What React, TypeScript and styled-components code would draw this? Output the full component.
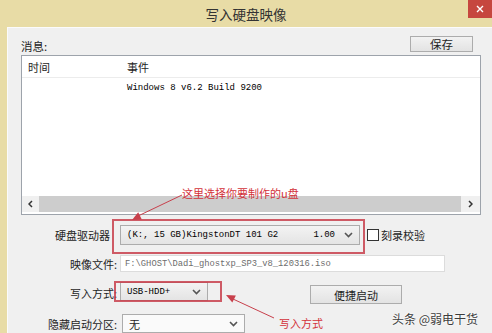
import styled, { createGlobalStyle } from "styled-components";

const annotationRed = "#c8404c";

const Chevron = ({ dir = "down" }: { dir?: "down" | "left" | "right" }) => {
    if (dir === "left") {
        return (
            <svg width="5" height="8" viewBox="0 0 5 8">
                <polyline points="4,1 1,4 4,7" fill="none" stroke="#333" strokeWidth="1.5" />
            </svg>
        );
    }
    if (dir === "right") {
        return (
            <svg width="5" height="8" viewBox="0 0 5 8">
                <polyline points="1,1 4,4 1,7" fill="none" stroke="#333" strokeWidth="1.5" />
            </svg>
        );
    }
    return (
        <svg width="9" height="6" viewBox="0 0 9 6">
            <polyline points="1,1 4.5,4.5 8,1" fill="none" stroke="#555" strokeWidth="1.6" />
        </svg>
    );
};

export default function App() {
    return (
        <>
            <GlobalStyle />
            <Window>
                <TitleBar>
                    <Title>写入硬盘映像</Title>
                    <CloseButton aria-label="关闭">
                        <svg width="8" height="8" viewBox="0 0 8 8">
                            <path d="M1 1L7 7M7 1L1 7" stroke="#fff" strokeWidth="1.4" />
                        </svg>
                    </CloseButton>
                </TitleBar>

                <Body>
                    <TopRow>
                        <SectionLabel>消息:</SectionLabel>
                        <SaveButton>保存</SaveButton>
                    </TopRow>

                    <ListBox>
                        <ListHeader>
                            <span>时间</span>
                            <span>事件</span>
                        </ListHeader>
                        <ListRows>
                            <ListRow>
                                <span />
                                <Mono>Windows 8 v6.2 Build 9200</Mono>
                            </ListRow>
                        </ListRows>
                        <HScrollBar>
                            <ScrollArrow $w={17}>
                                <Chevron dir="left" />
                            </ScrollArrow>
                            <ScrollThumb />
                            <ScrollArrow $w={19}>
                                <Chevron dir="right" />
                            </ScrollArrow>
                        </HScrollBar>
                    </ListBox>

                    <Form>
                        <FieldLabel $pad={7}>硬盘驱动器</FieldLabel>
                        <FieldCell>
                            <Combo $width={240} $height={20}>
                                <Mono>(K:, 15 GB)KingstonDT 101 G2</Mono>
                                <Spacer />
                                <Mono>1.00</Mono>
                                <ComboArrow $gap={9}>
                                    <Chevron />
                                </ComboArrow>
                            </Combo>
                            <CheckBox />
                            <CheckLabel>刻录校验</CheckLabel>
                            <MarkBox $left={-8} $top={-6} $width={253} $height={35} />
                        </FieldCell>

                        <FieldLabel>映像文件:</FieldLabel>
                        <FieldCell>
                            <PathInput>
                                <Mono>F:\GHOST\Dadi_ghostxp_SP3_v8_120316.iso</Mono>
                            </PathInput>
                        </FieldCell>

                        <FieldLabel>写入方式:</FieldLabel>
                        <FieldCell $align="flex-start">
                            <Combo $width={88} $height={19}>
                                <Mono>USB-HDD+</Mono>
                                <Spacer />
                                <ComboArrow $gap={0}>
                                    <Chevron />
                                </ComboArrow>
                            </Combo>
                            <QuickBootButton>便捷启动</QuickBootButton>
                            <MarkBox $left={-6} $top={-1} $width={108} $height={21} />
                        </FieldCell>

                        <FieldLabel>隐藏启动分区:</FieldLabel>
                        <FieldCell>
                            <Combo $width={123} $height={19} $light $offset={2}>
                                <ComboText>无</ComboText>
                                <Spacer />
                                <ComboArrow $gap={0}>
                                    <Chevron />
                                </ComboArrow>
                            </Combo>
                        </FieldCell>
                    </Form>
                </Body>

                <Arrows width="492" height="333" viewBox="0 0 492 333">
                    <line x1="182" y1="195" x2="138" y2="216" stroke={annotationRed} strokeWidth="1" />
                    <polygon points="132,220 141.8,219.5 138.2,212.3" fill={annotationRed} />
                    <line x1="274" y1="318" x2="233" y2="299" stroke={annotationRed} strokeWidth="1" />
                    <polygon points="226,295 235.9,295.4 232.3,302.6" fill={annotationRed} />
                </Arrows>
                <Note $left={182} $top={186}>这里选择你要制作的u盘</Note>
                <Note $left={279} $top={316}>写入方式</Note>
                <Watermark>头条 @弱电干货</Watermark>
            </Window>
        </>
    );
}

const GlobalStyle = createGlobalStyle`
    html, body {
        margin: 0;
        padding: 0;
    }
    body {
        width: 492px;
        height: 333px;
        overflow: hidden;
        background: #f0f0f0;
        font-family: "Noto Sans CJK SC", "Noto Sans", sans-serif;
        color: #1e1e1e;
    }
    * {
        box-sizing: border-box;
    }
`;

const Window = styled.div`
    position: relative;
    width: 492px;
    height: 333px;
    display: flex;
    flex-direction: column;
    background: #e8dca6;
    overflow: hidden;
`;

const TitleBar = styled.div`
    flex: none;
    height: 27px;
    display: grid;
    grid-template-columns: 1fr auto 1fr;
    align-items: center;
`;

const Title = styled.div`
    grid-column: 2;
    font-size: 13.5px;
    line-height: 16px;
    color: #333;
`;

const CloseButton = styled.button`
    grid-column: 3;
    justify-self: end;
    align-self: start;
    width: 24px;
    height: 18px;
    padding: 0;
    border: 0;
    background: #c6473f;
    display: flex;
    align-items: center;
    justify-content: center;
`;

const Body = styled.div`
    flex: 1;
    min-height: 0;
    margin-left: 7px;
    padding: 0 11px 0 13px;
    background: #f0f0f0;
    border-top: 1px solid #fbfbfb;
    border-left: 1px solid #fbfbfb;
    display: flex;
    flex-direction: column;
`;

const TopRow = styled.div`
    height: 28px;
    padding-bottom: 3px;
    display: flex;
    align-items: flex-end;
    justify-content: space-between;
`;

const SectionLabel = styled.span`
    font-size: 11.5px;
    line-height: 14px;
    margin-bottom: -1px;
`;

const SaveButton = styled.button`
    width: 63px;
    height: 16px;
    margin-right: 8px;
    padding: 0;
    font-family: inherit;
    font-size: 11.5px;
    line-height: 14px;
    color: #1e1e1e;
    border: 1px solid #acacac;
    background: linear-gradient(#f2f2f2, #e3e3e3);
`;

const ListBox = styled.div`
    height: 160px;
    flex: none;
    background: #fff;
    border: 1px solid #9da3ab;
    box-shadow: inset 0 -2px 0 #fff;
    display: flex;
    flex-direction: column;
`;

const ListHeader = styled.div`
    height: 22px;
    flex: none;
    padding-left: 6px;
    display: grid;
    grid-template-columns: 99px 1fr;
    align-items: center;
    font-size: 11px;
    border-bottom: 1px solid #ececec;
`;

const ListRows = styled.div`
    flex: 1;
    padding-top: 3px;
`;

const ListRow = styled.div`
    height: 14px;
    padding-left: 6px;
    display: grid;
    grid-template-columns: 99px 1fr;
    align-items: center;
`;

const Mono = styled.span`
    font-family: "Liberation Mono", "DejaVu Sans Mono", monospace;
    font-size: 9px;
    line-height: 12px;
    color: #000;
    white-space: pre;
`;

const HScrollBar = styled.div`
    height: 16px;
    flex: none;
    margin-bottom: 2px;
    display: flex;
    background: #e8e8e8;
`;

const ScrollArrow = styled.div<{ $w: number }>`
    width: ${(p) => p.$w}px;
    display: flex;
    align-items: center;
    justify-content: center;
    background: #f0f0f0;
`;

const ScrollThumb = styled.div`
    flex: 1;
    background: #cdcdcd;
`;

const Form = styled.div`
    margin-top: 10px;
    display: grid;
    grid-template-columns: 96px 1fr;
    column-gap: 3px;
    row-gap: 10px;
    align-items: center;
`;

const FieldLabel = styled.span<{ $pad?: number }>`
    text-align: right;
    font-size: 11px;
    line-height: 14px;
    padding-right: ${(p) => p.$pad ?? 0}px;
    color: #1e1e1e;
`;

const FieldCell = styled.div<{ $align?: string }>`
    position: relative;
    display: flex;
    align-items: ${(p) => p.$align ?? "center"};
`;

const Combo = styled.div<{ $width: number; $height: number; $light?: boolean; $offset?: number }>`
    width: ${(p) => p.$width}px;
    height: ${(p) => p.$height}px;
    margin-left: ${(p) => p.$offset ?? 0}px;
    padding: 0 5px 0 6px;
    display: flex;
    align-items: center;
    border: 1px solid #acacac;
    background: ${(p) => (p.$light ? "#fafafa" : "linear-gradient(#f3f3f3, #e4e4e4)")};
`;

const ComboText = styled.span`
    font-size: 11px;
    line-height: 14px;
`;

const Spacer = styled.span`
    flex: 1;
`;

const ComboArrow = styled.span<{ $gap: number }>`
    display: flex;
    margin-left: ${(p) => p.$gap}px;
    margin-right: 1px;
`;

const CheckBox = styled.span`
    width: 12px;
    height: 12px;
    margin-left: 7px;
    border: 1px solid #333;
    background: #fff;
`;

const CheckLabel = styled.span`
    margin-left: 2px;
    font-size: 11px;
    line-height: 14px;
`;

const PathInput = styled.div`
    width: 325px;
    height: 17px;
    padding-left: 4px;
    display: flex;
    align-items: center;
    background: #fff;
    border: 1px solid #dcdcdc;

    ${Mono} {
        color: #6d6d6d;
        font-size: 8.8px;
    }
`;

const QuickBootButton = styled.button`
    width: 92px;
    height: 19px;
    margin: 3px 0 0 102px;
    padding: 0;
    font-family: inherit;
    font-size: 11px;
    line-height: 14px;
    color: #1e1e1e;
    border: 1px solid #acacac;
    background: linear-gradient(#f2f2f2, #e3e3e3);
`;

const MarkBox = styled.div<{ $left: number; $top: number; $width: number; $height: number }>`
    position: absolute;
    left: ${(p) => p.$left}px;
    top: ${(p) => p.$top}px;
    width: ${(p) => p.$width}px;
    height: ${(p) => p.$height}px;
    border: 2px solid ${annotationRed};
    opacity: 0.85;
    pointer-events: none;
`;

const Arrows = styled.svg`
    position: absolute;
    left: 0;
    top: 0;
    pointer-events: none;
`;

const Note = styled.span<{ $left: number; $top: number }>`
    position: absolute;
    left: ${(p) => p.$left}px;
    top: ${(p) => p.$top}px;
    font-size: 11px;
    line-height: 14px;
    color: #d3323a;
    white-space: nowrap;
`;

const Watermark = styled.span`
    position: absolute;
    left: 392px;
    top: 311px;
    font-size: 12px;
    line-height: 16px;
    color: #3c3c3c;
    white-space: nowrap;
    text-shadow: 0 0 2px #fff, 0 0 2px #fff;
`;
